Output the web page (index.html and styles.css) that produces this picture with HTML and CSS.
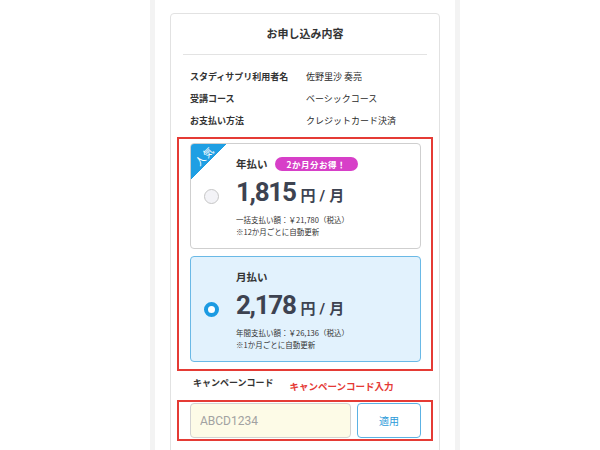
FILE: index.html
```html
<!DOCTYPE html>
<html lang="ja">
<head>
<meta charset="utf-8">
<title>お申し込み内容</title>
<link rel="stylesheet" href="styles.css">
</head>
<body>
<div class="frame">
  <section class="card">
    <h2 class="card-title">お申し込み内容</h2>
    <dl class="summary">
      <div class="summary-row"><dt>スタディサプリ利用者名</dt><dd>佐野里沙 奏亮</dd></div>
      <div class="summary-row"><dt>受講コース</dt><dd>ベーシックコース</dd></div>
      <div class="summary-row"><dt>お支払い方法</dt><dd>クレジットカード決済</dd></div>
    </dl>

    <div class="highlight plans">
      <div class="plan">
        <span class="ribbon"><span class="ribbon-text">人気</span></span>
        <span class="radio"></span>
        <div class="plan-body">
          <div class="plan-head"><span class="plan-name">年払い</span><span class="badge">2か月分お得！</span></div>
          <div class="price"><span class="amount">1,815</span><span class="unit">円</span><span class="slash">/</span><span class="unit">月</span></div>
          <p class="note">一括支払い額：￥21,780（税込）<br>※12か月ごとに自動更新</p>
        </div>
      </div>
      <div class="plan plan-selected">
        <span class="radio radio-on"></span>
        <div class="plan-body">
          <div class="plan-head"><span class="plan-name">月払い</span></div>
          <div class="price"><span class="amount">2,178</span><span class="unit">円</span><span class="slash">/</span><span class="unit">月</span></div>
          <p class="note">年間支払い額：￥26,136（税込）<br>※1か月ごとに自動更新</p>
        </div>
      </div>
    </div>

    <div class="campaign-head">
      <span class="campaign-label">キャンペーンコード</span>
      <span class="annotation">キャンペーンコード入力</span>
    </div>
    <div class="highlight campaign-form">
      <input class="code-input" type="text" placeholder="ABCD1234">
      <button class="apply" type="button">適用</button>
    </div>
  </section>
</div>
</body>
</html>
```
FILE: styles.css
```css
* { box-sizing: border-box; margin: 0; padding: 0; }
html, body { height: 100%; }
body {
  background: #fff;
  font-family: "Noto Sans CJK JP", "Noto Sans", sans-serif;
  color: #333;
  overflow: hidden;
}
.frame {
  width: 310px;
  height: 450px;
  margin-left: 150px;
  border-left: 5px solid #f3f3f3;
  border-right: 5px solid #f3f3f3;
  padding: 13px 15px 0;
  overflow: hidden;
}
.card {
  border: 1px solid #e2e2e2;
  border-radius: 4px;
  background: #fff;
  padding-bottom: 40px;
}
.card-title {
  font-size: 11px;
  font-weight: 700;
  line-height: 15px;
  text-align: center;
  padding: 12px 0 13px;
  margin: 0 12px;
  border-bottom: 1px solid #e3e3e3;
  color: #333;
}
.summary { padding: 11px 0 0 19px; }
.summary-row {
  display: flex;
  height: 22px;
  line-height: 22px;
  font-size: 9px;
}
.summary-row dt { width: 116px; font-weight: 700; }
.summary-row dd { font-weight: 400; color: #2b2b2b; }

.highlight {
  border: 2px solid #e53b35;
  margin: 0 6px;
}
.plans {
  margin-top: 5px;
  padding: 4px 10px 7px 11px;
  display: flex;
  flex-direction: column;
  gap: 7px;
}
.plan {
  position: relative;
  display: flex;
  height: 106px;
  border: 1px solid #cfcfcf;
  border-radius: 4px;
  background: #fff;
  overflow: hidden;
  padding: 13px 10px 0 13px;
}
.plan-selected {
  background: #e2f2fd;
  border-color: #6ab9e6;
}
.ribbon {
  position: absolute;
  top: 0;
  left: 0;
  width: 35px;
  height: 35px;
  background: linear-gradient(135deg, #1f9fe3 50%, transparent 50%);
}
.ribbon-text {
  position: absolute;
  left: 2px;
  top: 6px;
  width: 22px;
  line-height: 11px;
  font-size: 10px;
  color: #fff;
  text-align: center;
  letter-spacing: 1px;
  transform: rotate(-45deg);
}
.radio {
  flex-shrink: 0;
  align-self: center;
  width: 15px;
  height: 15px;
  border-radius: 50%;
  border: 1px solid #c6c6c6;
  background: #f3f3f7;
  margin-right: 17px;
  margin-top: -13px;
}
.radio-on {
  border: 4.5px solid #1c9be2;
  background: #fff;
}
.plan-body { flex: 1; }
.plan-head {
  display: flex;
  align-items: center;
  height: 14px;
  line-height: 14px;
}
.plan-name { font-size: 10.5px; font-weight: 700; color: #333; }
.badge {
  margin-left: 7px;
  height: 14px;
  line-height: 14px;
  padding: 0 12px;
  border-radius: 7px;
  background: #d73fc8;
  color: #fff;
  font-size: 8.5px;
  font-weight: 700;
  letter-spacing: 0.5px;
}
.price {
  margin-top: 6px;
  height: 30px;
  line-height: 30px;
  font-family: Roboto, "Noto Sans", sans-serif;
  font-size: 26px;
  font-weight: 700;
  color: #3d4351;
  white-space: nowrap;
}
.amount { letter-spacing: -1.3px; }
.unit {
  font-family: "Noto Sans CJK JP", sans-serif;
  font-size: 15px;
  line-height: 1;
  margin-left: 5px;
}
.slash {
  font-size: 15px;
  line-height: 1;
  margin-left: 4px;
  margin-right: -1px;
}
.note {
  margin-top: 7px;
  font-size: 7.5px;
  line-height: 12px;
  color: #333;
}

.campaign-head {
  display: flex;
  align-items: flex-start;
  height: 29px;
  padding: 5px 0 0 22px;
}
.campaign-label {
  font-size: 9px;
  font-weight: 700;
  line-height: 14px;
  color: #333;
}
.annotation {
  margin-left: 16px;
  margin-top: 3px;
  font-size: 9.5px;
  font-weight: 700;
  line-height: 14px;
  color: #e53935;
}
.campaign-form {
  display: flex;
  gap: 6px;
  padding: 1px 10px 1px 11px;
}
.code-input {
  flex: 1;
  min-width: 0;
  height: 35px;
  background: #fdfbe7;
  border: 1px solid #d2d2d2;
  border-radius: 4px;
  padding: 0 9px;
  font-family: Roboto, "Noto Sans", sans-serif;
  font-size: 12px;
  color: #333;
  outline: none;
}
.code-input::placeholder { color: #a2a2a2; }
.apply {
  width: 64px;
  height: 35px;
  background: #fff;
  border: 1px solid #5cb2e4;
  border-radius: 4px;
  color: #2b9ad9;
  font-family: "Noto Sans CJK JP", sans-serif;
  font-size: 10px;
}
```
